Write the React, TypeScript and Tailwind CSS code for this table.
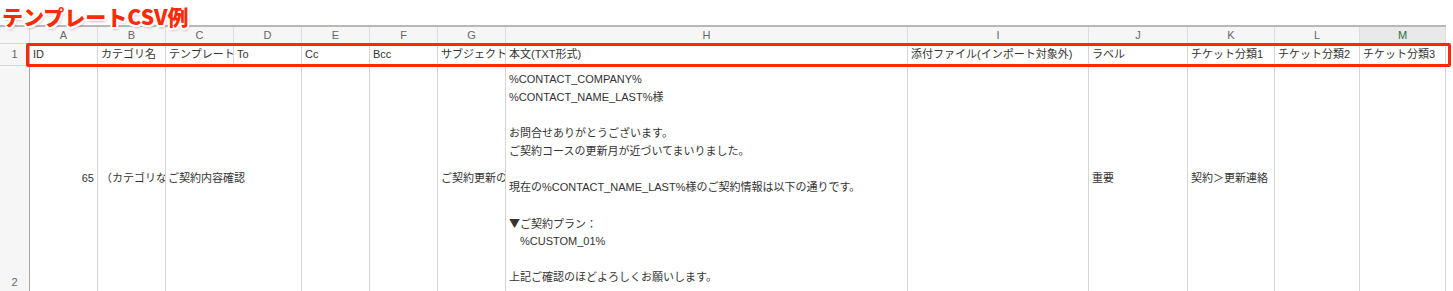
import React from "react";

const cols = ["A", "B", "C", "D", "E", "F", "G", "H", "I", "J", "K", "L", "M"];

const headers = [
  "ID",
  "カテゴリ名",
  "テンプレート",
  "To",
  "Cc",
  "Bcc",
  "サブジェクト",
  "本文(TXT形式)",
  "添付ファイル(インポート対象外)",
  "ラベル",
  "チケット分類1",
  "チケット分類2",
  "チケット分類3",
];

const bodyLines: React.ReactNode[] = [
  "%CONTACT_COMPANY%",
  "%CONTACT_NAME_LAST%様",
  "",
  "お問合せありがとうございます。",
  "ご契約コースの更新月が近づいてまいりました。",
  "",
  "現在の%CONTACT_NAME_LAST%様のご契約情報は以下の通りです。",
  "",
  <>
    <span className="font-['Noto_Sans_CJK_JP',sans-serif]">▼</span>ご契約プラン：
  </>,
  "　%CUSTOM_01%",
  "",
  "上記ご確認のほどよろしくお願いします。",
];

const font = "font-['Liberation_Sans','Noto_Sans_CJK_JP',sans-serif]";

export default function App() {
  const gridCols =
    "grid-cols-[30px_68px_68px_68px_68px_68px_68px_68px_402px_181px_99px_87px_85px_86px]";
  return (
    <div className={`relative w-[1453px] h-[291px] overflow-hidden bg-white ${font} text-[11px] text-[#333]`}>
      {/* title */}
      <div className="h-[25px] relative">
        <div className="absolute left-[2px] top-[3px] z-20 font-['Noto_Sans_CJK_JP',sans-serif] font-black text-[21px] leading-[26px] text-[#ff2a05] [text-shadow:-1.5px_-1.5px_0_#fff,1.5px_-1.5px_0_#fff,-1.5px_1.5px_0_#fff,1.5px_1.5px_0_#fff,0_2px_0_#fff,2px_0_0_#fff,-2px_0_0_#fff,0_-2px_0_#fff,1px_2px_3px_rgba(0,0,0,0.45)]">
          テンプレートCSV例
        </div>
      </div>

      {/* sheet */}
      <div className={`grid ${gridCols} grid-rows-[17px_22px_225px] w-[1446px] border-t-2 border-[#b8b8b8]`}>
        {/* column letters */}
        <div className="bg-[#f6f6f6] border-r border-b border-[#d8d8d8]" />
        {cols.map((c) => (
          <div
            key={c}
            className={`flex items-center justify-center border-r border-b border-[#dedede] text-[11px] ${
              c === "M" ? "bg-[#e9e9e9] text-[#1e7145]" : "bg-[#f6f6f6] text-[#666]"
            }`}
          >
            {c}
          </div>
        ))}

        {/* row 1 */}
        <div className="flex items-center justify-center bg-[#f6f6f6] border-r border-[#a8a8a8] border-b border-b-[#d8d8d8] text-[#666]">
          1
        </div>
        {headers.map((h, i) => (
          <div
            key={i}
            className="flex items-center pl-[3px] border-r border-b border-[#d6d6d6] overflow-hidden whitespace-nowrap"
          >
            {h}
          </div>
        ))}

        {/* row 2 */}
        <div className="flex items-end justify-center pb-[1px] bg-[#f6f6f6] border-r border-[#a8a8a8] text-[#666]">
          2
        </div>
        <div className="flex items-center justify-end pr-[3px] border-r border-[#d6d6d6]">65</div>
        <div className="flex items-center pl-[3px] border-r border-[#d6d6d6] overflow-hidden whitespace-nowrap">
          （カテゴリな
        </div>
        <div className="col-span-2 flex items-center pl-[2px] border-r border-[#d6d6d6] overflow-hidden whitespace-nowrap">
          ご契約内容確認
        </div>
        <div className="border-r border-[#d6d6d6]" />
        <div className="border-r border-[#d6d6d6]" />
        <div className="flex items-center pl-[3px] border-r border-[#d6d6d6] overflow-hidden whitespace-nowrap">
          ご契約更新の
        </div>
        <div className="min-h-0 pl-[3px] pt-[4px] border-r border-[#d6d6d6] overflow-hidden">
          {bodyLines.map((l, i) => (
            <div key={i} className="h-[18px] leading-[18px] whitespace-pre">
              {l}
            </div>
          ))}
        </div>
        <div className="border-r border-[#d6d6d6]" />
        <div className="flex items-center pl-[3px] border-r border-[#d6d6d6]">重要</div>
        <div className="flex items-center pl-[3px] border-r border-[#d6d6d6] whitespace-nowrap overflow-hidden">
          契約＞更新連絡
        </div>
        <div className="border-r border-[#d6d6d6]" />
        <div className="border-r border-[#d6d6d6]" />
      </div>

      {/* red highlight box */}
      <div className="absolute left-[26px] top-[43px] w-[1425px] h-[24px] border-[3px] border-[#ff2a05] rounded-[2px] z-10 pointer-events-none" />
    </div>
  );
}
